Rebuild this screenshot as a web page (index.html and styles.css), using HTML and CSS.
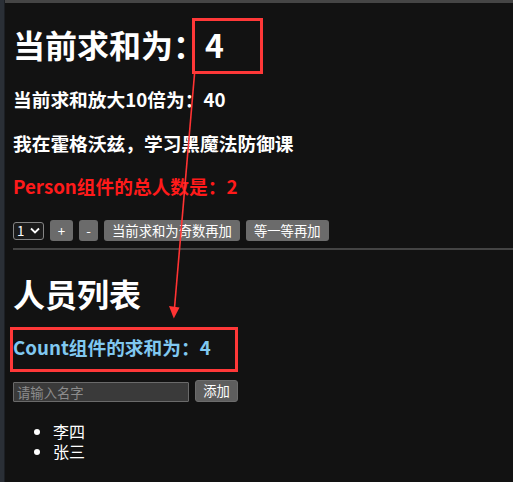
FILE: index.html
```html
<!DOCTYPE html>
<html lang="zh-CN">
<head>
<meta charset="utf-8">
<title>React Redux Demo</title>
<link rel="stylesheet" href="styles.css">
</head>
<body>
<div class="frame">
  <div class="side-strip"></div>
  <div class="viewport">
    <div class="top-strip"></div>
    <div class="content">
      <h1 class="sum-title">当前求和为：4</h1>
      <h3 class="line line-a">当前求和放大10倍为：40</h3>
      <h3 class="line line-b">我在霍格沃兹，学习黑魔法防御课</h3>
      <h3 class="line line-c person-count">Person组件的总人数是：2</h3>
      <div class="controls">
        <div class="select-box"><span class="select-val">1</span>
          <svg class="chev" width="10" height="7" viewBox="0 0 10 7"><path d="M1 1.5 L5 5.5 L9 1.5" fill="none" stroke="#fff" stroke-width="1.8"/></svg>
        </div>
        <button class="btn btn-plus">+</button>
        <button class="btn btn-minus">-</button>
        <button class="btn">当前求和为奇数再加</button>
        <button class="btn">等一等再加</button>
      </div>
      <hr class="divider">
      <h1 class="list-title">人员列表</h1>
      <h3 class="line count-sum">Count组件的求和为：4</h3>
      <div class="add-row">
        <input class="name-input" type="text" placeholder="请输入名字">
        <button class="btn btn-add">添加</button>
      </div>
      <ul class="people">
        <li>李四</li>
        <li>张三</li>
      </ul>
    </div>
  </div>
</div>
<div class="mark mark-top"></div>
<div class="mark mark-bottom"></div>
<svg class="arrow" width="513" height="482" viewBox="0 0 513 482">
  <line x1="194.5" y1="74" x2="174.5" y2="308" stroke="#ff3333" stroke-width="1.6"/>
  <polygon points="169,306 179.5,307.5 173.8,318.5" fill="#ff3333"/>
</svg>
</body>
</html>
```

FILE: styles.css
```css
html, body {
  margin: 0;
  padding: 0;
  background: #121212;
  height: 100%;
  overflow: hidden;
}

body {
  font-family: "Noto Sans CJK SC", "Noto Sans", sans-serif;
  color: #ffffff;
  position: relative;
}

.frame {
  display: flex;
  height: 482px;
}

.side-strip {
  width: 4px;
  flex: none;
  background: #2a2f36;
  border-right: 1px solid #1c1f24;
}

.viewport {
  flex: 1;
  display: flex;
  flex-direction: column;
}

.top-strip {
  height: 3px;
  background: #454545;
  flex: none;
}

.content {
  padding: 0 0 0 8px;
}

h1, h3 {
  margin: 0;
  font-weight: bold;
}

.sum-title {
  font-size: 32px;
  line-height: 40px;
  margin-top: 21px;
}

.line {
  font-size: 18.72px;
  line-height: 24px;
}

.line-a { margin-top: 23px; }
.line-b { margin-top: 20px; }
.line-c { margin-top: 19px; }

.person-count {
  color: #ff1a1a;
}

.controls {
  display: flex;
  align-items: center;
  gap: 6px;
  margin-top: 22px;
  height: 21px;
}

.select-box {
  box-sizing: border-box;
  width: 31px;
  height: 18px;
  border: 1px solid #858585;
  border-radius: 3px;
  background: #1b1b1b;
  display: flex;
  align-items: center;
  justify-content: space-between;
  padding: 0 3px 0 3px;
  font-size: 13.33px;
  line-height: 16px;
}

.chev { display: block; }

.btn {
  font-family: "Noto Sans CJK SC", "Noto Sans", sans-serif;
  font-size: 13.33px;
  color: #ffffff;
  background: #6b6b6b;
  border: none;
  border-radius: 3px;
  height: 21px;
  padding: 0 8px;
  line-height: 21px;
  margin: 0;
  cursor: pointer;
}

.btn-plus { width: 23px; padding: 0; }
.btn-minus { width: 19px; padding: 0; }

.divider {
  border: none;
  height: 2px;
  background: #444444;
  margin: 7px 0 0 0;
}

.list-title {
  font-size: 32px;
  line-height: 40px;
  margin-top: 23px;
}

.count-sum {
  color: #80c8f0;
  margin-top: 22px;
}

.add-row {
  display: flex;
  align-items: flex-end;
  gap: 6px;
  margin-top: 21px;
  height: 22px;
}

.name-input {
  box-sizing: border-box;
  width: 176px;
  height: 20px;
  margin: 0;
  padding: 0 3px;
  border: 1px solid #6a6a6a;
  background: #3a3a3a;
  color: #fff;
  font-family: "Noto Sans CJK SC", "Noto Sans", sans-serif;
  font-size: 13.33px;
  border-radius: 1px;
  outline: none;
}

.name-input::placeholder {
  color: #8c8c8c;
}

.btn-add {
  height: 22px;
  width: 43px;
  padding: 0;
  background: #5e5e5e;
  border: 1px solid #6c6c6c;
  line-height: 20px;
}

.people {
  margin: 19px 0 0 0;
  padding-left: 40px;
  font-size: 16px;
  line-height: 20px;
}

.mark {
  position: absolute;
  box-sizing: border-box;
  border: 3px solid #ff3838;
  pointer-events: none;
}

.mark-top {
  left: 192px;
  top: 18px;
  width: 71px;
  height: 56px;
}

.mark-bottom {
  left: 10px;
  top: 327px;
  width: 228px;
  height: 45px;
}

.arrow {
  position: absolute;
  left: 0;
  top: 0;
  pointer-events: none;
}
```
